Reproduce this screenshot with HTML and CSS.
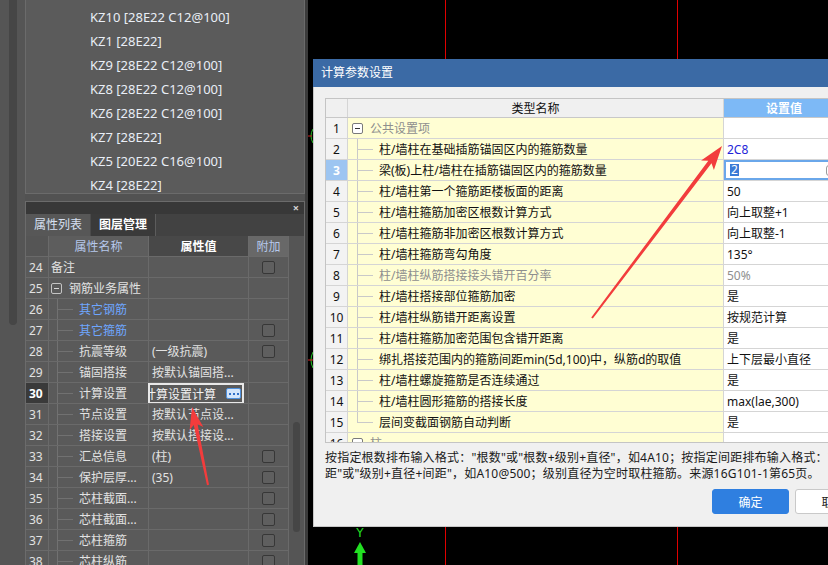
FILE: index.html
```html
<!DOCTYPE html>
<html lang="zh-CN">
<head>
<meta charset="utf-8">
<title>计算参数设置</title>
<link rel="stylesheet" href="styles.css">
</head>
<body>
<div class="screen">
  <aside class="left">
    <div class="outer-track"><div class="outer-thumb"></div></div>
    <div class="main">
      <div class="tree">
        <div class="tree-item">KZ10 [28E22 C12@100]</div>
        <div class="tree-item">KZ1 [28E22]</div>
        <div class="tree-item">KZ9 [28E22 C12@100]</div>
        <div class="tree-item">KZ8 [28E22 C12@100]</div>
        <div class="tree-item">KZ6 [28E22 C12@100]</div>
        <div class="tree-item">KZ7 [28E22]</div>
        <div class="tree-item">KZ5 [20E22 C16@100]</div>
        <div class="tree-item">KZ4 [28E22]</div>
      </div>
      <div class="props">
        <div class="props-title"><span class="close">×</span></div>
        <div class="tabs">
          <div class="tab active">属性列表</div>
          <div class="tab">图层管理</div>
        </div>
        <div class="props-body">
          <div class="ptable">
            <div class="prow phead">
              <div class="pc pnum"></div>
              <div class="pc pname hname">属性名称</div>
              <div class="pc pval hval">属性值</div>
              <div class="pc pext hext">附加</div>
            </div>
            <div class="prow">
              <div class="pc pnum">24</div>
              <div class="pc pname"><span class="plain">备注</span></div>
              <div class="pc pval"></div>
              <div class="pc pext"><span class="cb"></span></div>
            </div>
            <div class="prow">
              <div class="pc pnum">25</div>
              <div class="pc pname"><span class="pminus"></span><span>钢筋业务属性</span></div>
              <div class="pc pval"></div>
              <div class="pc pext"></div>
            </div>
            <div class="prow">
              <div class="pc pnum">26</div>
              <div class="pc pname"><span class="pbranch"></span><span class="blue">其它钢筋</span></div>
              <div class="pc pval"></div>
              <div class="pc pext"></div>
            </div>
            <div class="prow">
              <div class="pc pnum">27</div>
              <div class="pc pname"><span class="pbranch"></span><span class="blue">其它箍筋</span></div>
              <div class="pc pval"></div>
              <div class="pc pext"><span class="cb"></span></div>
            </div>
            <div class="prow">
              <div class="pc pnum">28</div>
              <div class="pc pname"><span class="pbranch"></span><span>抗震等级</span></div>
              <div class="pc pval">(一级抗震)</div>
              <div class="pc pext"><span class="cb"></span></div>
            </div>
            <div class="prow">
              <div class="pc pnum">29</div>
              <div class="pc pname"><span class="pbranch"></span><span>锚固搭接</span></div>
              <div class="pc pval">按默认锚固搭...</div>
              <div class="pc pext"></div>
            </div>
            <div class="prow">
              <div class="pc pnum cur">30</div>
              <div class="pc pname"><span class="pbranch"></span><span>计算设置</span></div>
              <div class="pc pval editing">
                <div class="peditor"><span class="ptext">计算设置计算</span><span class="dots"><i></i><i></i><i></i></span></div>
              </div>
              <div class="pc pext"></div>
            </div>
            <div class="prow">
              <div class="pc pnum">31</div>
              <div class="pc pname"><span class="pbranch"></span><span>节点设置</span></div>
              <div class="pc pval">按默认节点设...</div>
              <div class="pc pext"></div>
            </div>
            <div class="prow">
              <div class="pc pnum">32</div>
              <div class="pc pname"><span class="pbranch"></span><span>搭接设置</span></div>
              <div class="pc pval">按默认搭接设...</div>
              <div class="pc pext"></div>
            </div>
            <div class="prow">
              <div class="pc pnum">33</div>
              <div class="pc pname"><span class="pbranch"></span><span>汇总信息</span></div>
              <div class="pc pval">(柱)</div>
              <div class="pc pext"><span class="cb"></span></div>
            </div>
            <div class="prow">
              <div class="pc pnum">34</div>
              <div class="pc pname"><span class="pbranch"></span><span>保护层厚...</span></div>
              <div class="pc pval">(35)</div>
              <div class="pc pext"><span class="cb"></span></div>
            </div>
            <div class="prow">
              <div class="pc pnum">35</div>
              <div class="pc pname"><span class="pbranch"></span><span>芯柱截面...</span></div>
              <div class="pc pval"></div>
              <div class="pc pext"><span class="cb"></span></div>
            </div>
            <div class="prow">
              <div class="pc pnum">36</div>
              <div class="pc pname"><span class="pbranch"></span><span>芯柱截面...</span></div>
              <div class="pc pval"></div>
              <div class="pc pext"><span class="cb"></span></div>
            </div>
            <div class="prow">
              <div class="pc pnum">37</div>
              <div class="pc pname"><span class="pbranch"></span><span>芯柱箍筋</span></div>
              <div class="pc pval"></div>
              <div class="pc pext"><span class="cb"></span></div>
            </div>
            <div class="prow">
              <div class="pc pnum">38</div>
              <div class="pc pname"><span class="pbranch"></span><span>芯柱纵筋</span></div>
              <div class="pc pval"></div>
              <div class="pc pext"><span class="cb"></span></div>
            </div>
          </div>
          <div class="pscroll"><div class="pthumb"></div></div>
        </div>
      </div>
    </div>
    <div class="edge"></div>
  </aside>

  <main class="canvas">
    <div class="redline l1"></div>
    <div class="redline l2"></div>
    <svg class="mark m1" width="6" height="16" viewBox="0 0 6 16"><path d="M5 1 Q1 8 5 15" fill="none" stroke="#22c022" stroke-width="1"/><path d="M0 8 H4" stroke="#d02020" stroke-width="1"/></svg>
    <svg class="mark m2" width="6" height="18" viewBox="0 0 6 18"><path d="M5 1 Q1 9 5 17" fill="none" stroke="#22c022" stroke-width="1"/><path d="M0 9 H5" stroke="#e02020" stroke-width="1"/></svg>
    <div class="axis">
      <span class="axis-y">Y</span>
      <svg class="axis-arrow" width="14" height="24" viewBox="0 0 14 24"><polygon points="7,0 13,11 1,11" fill="#22e022"/><rect x="4.5" y="10" width="5" height="14" fill="#22e022"/></svg>
    </div>

    <section class="dialog">
      <div class="dlg-title">计算参数设置</div>
      <div class="dlg-body">
        <div class="dtable">
          <div class="drow dhead">
            <div class="dc dnum"></div>
            <div class="dc dname hcenter">类型名称</div>
            <div class="dc dval hset">设置值</div>
          </div>
          <div class="drow">
            <div class="dc dnum">1</div>
            <div class="dc dname group"><span class="dminus"></span><span class="gray">公共设置项</span></div>
            <div class="dc dval"></div>
          </div>
          <div class="drow">
            <div class="dc dnum">2</div>
            <div class="dc dname"><span class="dbranch"></span><span>柱/墙柱在基础插筋锚固区内的箍筋数量</span></div>
            <div class="dc dval bluev">2C8</div>
          </div>
          <div class="drow">
            <div class="dc dnum sel">3</div>
            <div class="dc dname"><span class="dbranch"></span><span>梁(板)上柱/墙柱在插筋锚固区内的箍筋数量</span></div>
            <div class="dc dval deditor"><span class="hl">2</span><span class="edit-btn"></span></div>
          </div>
          <div class="drow">
            <div class="dc dnum">4</div>
            <div class="dc dname"><span class="dbranch"></span><span>柱/墙柱第一个箍筋距楼板面的距离</span></div>
            <div class="dc dval">50</div>
          </div>
          <div class="drow">
            <div class="dc dnum">5</div>
            <div class="dc dname"><span class="dbranch"></span><span>柱/墙柱箍筋加密区根数计算方式</span></div>
            <div class="dc dval">向上取整+1</div>
          </div>
          <div class="drow">
            <div class="dc dnum">6</div>
            <div class="dc dname"><span class="dbranch"></span><span>柱/墙柱箍筋非加密区根数计算方式</span></div>
            <div class="dc dval">向上取整-1</div>
          </div>
          <div class="drow">
            <div class="dc dnum">7</div>
            <div class="dc dname"><span class="dbranch"></span><span>柱/墙柱箍筋弯勾角度</span></div>
            <div class="dc dval">135°</div>
          </div>
          <div class="drow">
            <div class="dc dnum">8</div>
            <div class="dc dname"><span class="dbranch"></span><span class="gray">柱/墙柱纵筋搭接接头错开百分率</span></div>
            <div class="dc dval gray">50%</div>
          </div>
          <div class="drow">
            <div class="dc dnum">9</div>
            <div class="dc dname"><span class="dbranch"></span><span>柱/墙柱搭接部位箍筋加密</span></div>
            <div class="dc dval">是</div>
          </div>
          <div class="drow">
            <div class="dc dnum">10</div>
            <div class="dc dname"><span class="dbranch"></span><span>柱/墙柱纵筋错开距离设置</span></div>
            <div class="dc dval">按规范计算</div>
          </div>
          <div class="drow">
            <div class="dc dnum">11</div>
            <div class="dc dname"><span class="dbranch"></span><span>柱/墙柱箍筋加密范围包含错开距离</span></div>
            <div class="dc dval">是</div>
          </div>
          <div class="drow">
            <div class="dc dnum">12</div>
            <div class="dc dname"><span class="dbranch"></span><span>绑扎搭接范围内的箍筋间距min(5d,100)中，纵筋d的取值</span></div>
            <div class="dc dval">上下层最小直径</div>
          </div>
          <div class="drow">
            <div class="dc dnum">13</div>
            <div class="dc dname"><span class="dbranch"></span><span>柱/墙柱螺旋箍筋是否连续通过</span></div>
            <div class="dc dval">是</div>
          </div>
          <div class="drow">
            <div class="dc dnum">14</div>
            <div class="dc dname"><span class="dbranch"></span><span>柱/墙柱圆形箍筋的搭接长度</span></div>
            <div class="dc dval">max(lae,300)</div>
          </div>
          <div class="drow">
            <div class="dc dnum">15</div>
            <div class="dc dname"><span class="dbranch last"></span><span>层间变截面钢筋自动判断</span></div>
            <div class="dc dval">是</div>
          </div>
          <div class="drow partial">
            <div class="dc dnum">16</div>
            <div class="dc dname group"><span class="dminus"></span><span class="gray">柱</span></div>
            <div class="dc dval"></div>
          </div>
        </div>
        <p class="desc">按指定根数排布输入格式："根数"或"根数+级别+直径"，如4A10；按指定间距排布输入格式："间<br>距"或"级别+直径+间距"，如A10@500；级别直径为空时取柱箍筋。来源16G101-1第65页。</p>
        <div class="buttons">
          <button class="btn primary">确定</button>
          <button class="btn">取消</button>
        </div>
      </div>
    </section>
  </main>

  <svg class="annot" width="828" height="565" viewBox="0 0 828 565">
    <polygon fill="#f23c3c" points="591.2,317.4 708.3,160.8 701.1,160.4 722,146 713.9,170.0 711.5,163.2 592.8,318.6"/>
    <polygon fill="#f23c3c" points="207.0,485.2 193.7,425.0 189.6,429.9 192,407 203.3,427.1 197.6,424.2 209.0,484.8"/>
  </svg>
</div>
</body>
</html>
```

FILE: styles.css
```css
* { box-sizing: border-box; margin: 0; padding: 0; }
html, body { width: 828px; height: 565px; overflow: hidden; background: #000; }
body { font-family: "Noto Sans", "Noto Sans CJK SC", sans-serif; font-size: 12px; }

.screen { position: relative; display: flex; width: 828px; height: 565px; overflow: hidden; }

/* ---------- left dock ---------- */
.left { display: flex; flex: none; width: 308px; height: 565px; background: #525252; }
.outer-track { width: 25px; background: #555; }
.outer-thumb { width: 8px; height: 325px; margin-left: 9px; background: #464646; border-radius: 0 0 4px 4px; }
.main { width: 280px; display: flex; flex-direction: column; background: #525252; }
.edge { width: 3px; background: #3b3b3b; }

.tree { flex: none; height: 194px; border: 1px solid #6b6b6b; border-top: none; background: #5b5b5b; padding: 5px 0 0 64px; }
.tree-item { height: 24px; line-height: 24px; font-size: 13px; color: #e9eef6; white-space: nowrap; }

.props { margin-top: 7px; flex: 1; min-height: 0; border: 1px solid #6b6b6b; border-bottom: none; display: flex; flex-direction: column; background: #5a5a5a; }
.props-title { height: 12px; background: #383838; display: flex; justify-content: flex-end; align-items: center; padding-right: 5px; }
.close { color: #d0d0d0; font-size: 11px; line-height: 12px; font-weight: bold; }
.tabs { height: 22px; background: #424242; display: flex; }
.tab { width: 65px; line-height: 22px; padding-left: 8px; color: #fff; font-weight: bold; background: #3a3a3a; border-right: 1px solid #5c5c5c; white-space: nowrap; }
.tab.active { background: #575757; color: #d6e0f2; font-weight: normal; border-right: 1px solid #4a4a4a; }

.props-body { flex: 1; display: flex; min-height: 0; }
.ptable { width: 263px; }
.prow { display: flex; height: 21px; border-bottom: 1px solid #6a6a6a; color: #e2e2e2; }
.pc { border-right: 1px solid #6a6a6a; display: flex; align-items: center; white-space: nowrap; overflow: hidden; }
.pnum { width: 23px; padding-left: 3px; }
.pnum.cur { background: #3a3a3a; color: #fff; font-weight: bold; }
.pname { width: 100px; }
.pval { width: 100px; padding-left: 3px; }
.pext { width: 40px; justify-content: center; }
.phead .pnum { background: #555; }
.hname { justify-content: center; background: #5d5d5d; color: #b6c8ec; }
.hval { justify-content: center; background: #484848; color: #fff; font-weight: bold; padding-left: 0; }
.hext { background: #686868; color: #b6c8ec; }
.plain { margin-left: 2px; }
.pminus { width: 11px; height: 11px; margin: 0 7px 0 2px; border: 1px solid #c4c4c4; border-radius: 2px; display: flex; align-items: center; justify-content: center; flex: none; }
.pminus::after { content: ""; width: 5px; height: 1px; background: #d8d8d8; }
.pbranch { align-self: stretch; width: 16px; margin: 0 6px 0 8px; flex: none;
  background: linear-gradient(#717171, #717171) 0 0 / 1px 100% no-repeat, linear-gradient(#717171, #717171) 0 50% / 16px 1px no-repeat; }
.blue { color: #6ea6ff; }
.cb { width: 13px; height: 13px; border: 1px solid #373737; border-radius: 2px; background: #5f5f5f; margin-left: -1px; }

.pval.editing { padding-left: 0; align-items: stretch; margin-left: -1px; width: 101px; border-left: none; }
.peditor { width: 96px; height: 21px; border: 2px solid #e8e8e8; display: flex; align-items: center; overflow: hidden; background: #5a5a5a; }
.ptext { margin-left: -6px; color: #f2f2f2; white-space: nowrap; flex: none; }
.dots { margin-left: auto; margin-right: 1px; width: 15px; height: 11px; border: 1px solid #4f90dc; border-radius: 2px; background: #d3e5fb; display: flex; align-items: center; justify-content: center; gap: 2px; flex: none; }
.dots i { width: 2px; height: 2px; background: #2f6fc8; }

.pscroll { flex: 1; background: #555; }
.pthumb { width: 7px; height: 110px; margin: 186px 0 0 4px; border-radius: 4px; background: #464646; }

/* ---------- canvas ---------- */
.canvas { flex: 1; position: relative; background: #000; }
.redline { position: absolute; top: 0; bottom: 0; width: 1px; background: #e00000; }
.l1 { left: 137px; }
.l2 { left: 369px; }
.mark { position: absolute; left: 0; display: block; }
.m1 { top: 128px; }
.m2 { top: 351px; }
.axis { position: absolute; left: 45px; top: 527px; width: 14px; display: flex; flex-direction: column; align-items: center; }
.axis-y { color: #22e022; font-family: "DejaVu Sans", sans-serif; font-size: 12px; line-height: 13px; }
.axis-arrow { display: block; margin-top: 2px; }

/* ---------- dialog ---------- */
.dialog { position: absolute; left: 5px; top: 59px; width: 560px; height: 468px; background: #f0f0f0; border: 1px solid #c6c6c6; border-top: none; display: flex; flex-direction: column; }
.dlg-title { height: 28px; line-height: 28px; background: #3b6aa5; color: #fff; padding-left: 8px; margin: 0 -1px; }
.dlg-body { padding: 11px 0 0 11px; }
.dtable { width: 520px; height: 345px; border: 1px solid #c4c4c4; background: #fff; overflow: hidden; }
.drow { display: flex; height: 21px; border-bottom: 1px solid #d5d5d5; color: #111; }
.drow.partial { height: 9px; align-items: flex-start; }
.drow.partial .dc { height: 20px; align-self: flex-start; }
.dc { display: flex; align-items: center; white-space: nowrap; overflow: hidden; }
.dnum { width: 22px; justify-content: center; background: #f3f3f3; border-right: 1px solid #d5d5d5; }
.dnum.sel { background: #9dc5f1; color: #fff; font-weight: bold; }
.dname { width: 376px; background: #fffed3; border-right: 1px solid #d5d5d5; }
.dval { flex: 1; padding-left: 3px; background: #fff; }
.dhead { height: 19px; border-bottom: 1px solid #c8c8c8; }
.dhead .dnum, .dhead .hcenter { background: #f0f0f0; }
.hcenter { justify-content: center; }
.hset { background: #7db9f6; color: #fff; justify-content: center; padding-left: 0; font-weight: bold; }
.gray { color: #8e8e8e; }
.bluev { color: #2424d8; }
.dminus { width: 11px; height: 11px; margin: 0 7px 0 4px; border: 1px solid #7a7a7a; border-radius: 2px; background: #fff; display: flex; align-items: center; justify-content: center; flex: none; }
.dminus::after { content: ""; width: 5px; height: 1px; background: #333; }
.dbranch { align-self: stretch; width: 16px; margin: 0 6px 0 9px; flex: none;
  background: linear-gradient(#c9c9c9, #c9c9c9) 0 0 / 1px 100% no-repeat, linear-gradient(#c9c9c9, #c9c9c9) 0 50% / 16px 1px no-repeat; }
.dbranch.last { background: linear-gradient(#c9c9c9, #c9c9c9) 0 0 / 1px 50% no-repeat, linear-gradient(#c9c9c9, #c9c9c9) 0 50% / 16px 1px no-repeat; }
.deditor { box-shadow: inset 0 0 0 2px #6aa7ea; padding-left: 6px; }
.hl { background: #3a7ad6; color: #fff; line-height: 12px; padding: 0 1px; }
.edit-btn { width: 10px; height: 11px; margin-left: 87px; border: 1px solid #9a9a9a; border-radius: 3px; flex: none; }

.desc { margin-top: 7px; line-height: 16px; color: #1a1a1a; white-space: nowrap; letter-spacing: 0.2px; }
.buttons { margin-top: 7px; display: flex; gap: 6px; padding-left: 387px; }
.btn { width: 80px; height: 25px; border: 1px solid #c9c9c9; border-radius: 3px; background: #fff; color: #222; font: inherit; }
.btn.primary { background: #2f7fe0; border-color: #2f7fe0; color: #fff; }

.annot { position: absolute; left: 0; top: 0; pointer-events: none; }
```
